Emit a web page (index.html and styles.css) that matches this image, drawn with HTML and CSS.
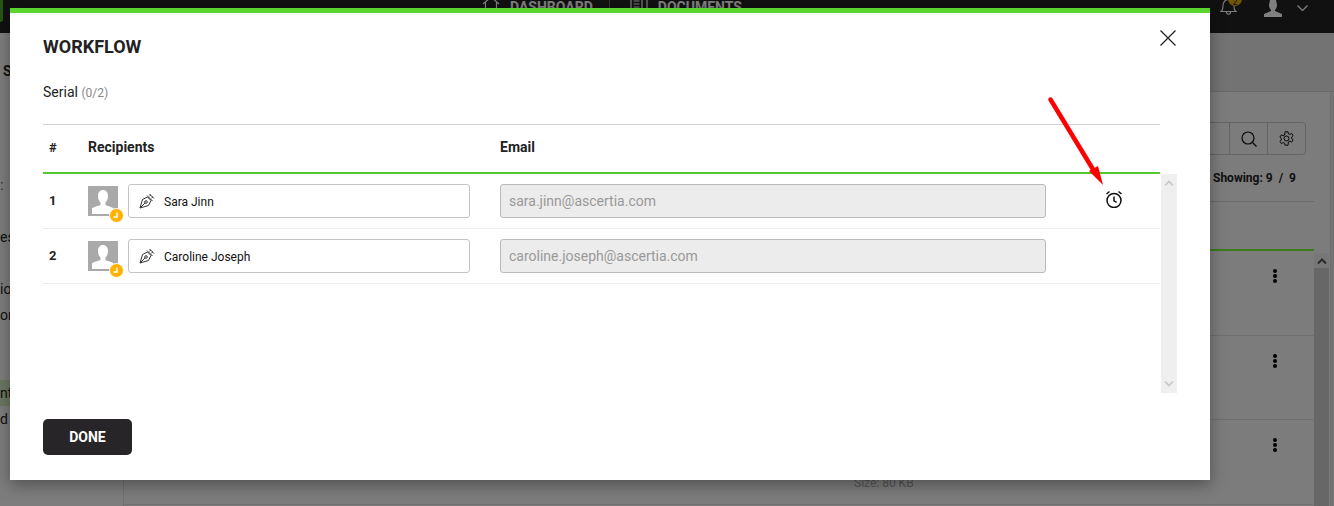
FILE: index.html
```html
<!DOCTYPE html>
<html lang="en">
<head>
  <meta charset="UTF-8" />
  <meta name="viewport" content="width=device-width, initial-scale=1.0" />
  <title>Workflow</title>
  <link rel="stylesheet" href="styles.css">
</head>
<body>
  <div class="page">
    <header class="topbar">
      <div class="brand"></div>
      <nav class="nav">
        <svg class="nav-icon" width="18" height="18" viewBox="0 0 18 18" fill="none" stroke="#fff" stroke-width="1.2"><path d="M1 8 9 1l8 7M3.5 6.5V17h11V6.5"/></svg>
        <span class="nav-link">DASHBOARD</span>
        <span class="nav-sep"></span>
        <svg class="nav-icon" width="18" height="18" viewBox="0 0 18 18" fill="none" stroke="#fff" stroke-width="1.2"><path d="M1 1h11v16H1zM15 2h2v15h-2M3.5 5h6M3.5 8h6M3.5 11h6"/></svg>
        <span class="nav-link">DOCUMENTS</span>
      </nav>
      <div class="top-actions">
        <div class="bell">
          <svg width="17" height="18" viewBox="0 0 17 18" fill="none" stroke="#fff" stroke-width="1.1"><path d="M1 13.5c2-1.500 2-3 2-6 0-3 2-6 5.500-6S14 4.500 14 7.500c0 3 0 4.500 2 6zM6.500 14c0 3 4 3 4 0"/></svg>
          <span class="bell-badge">2</span>
        </div>
        <svg class="user-icon" width="18" height="17" viewBox="0 0 18 17" fill="#fff"><path d="M6 0h6l1 5c0 2-1 4-2 5v1l7 3v3H0v-3l7-3v-1C6 9 5 7 5 5z"/></svg>
        <svg class="caret" width="11" height="6" viewBox="0 0 11 6" fill="none" stroke="#fff" stroke-width="1.3"><path d="M.5.5l5 5 5-5"/></svg>
      </div>
    </header>

    <div class="content">
      <aside class="sidebar">
        <div class="side-title">S</div>
        <div class="side-link">:</div>
        <div class="side-item first">es</div>
        <div class="side-item tall">io</div>
        <div class="side-item">on</div>
        <div class="side-item active">nt</div>
        <div class="side-item">d</div>
      </aside>
      <main class="main">
        <div class="subhead"></div>
        <div class="panel">
          <div class="list-col">
            <div class="toolbar">
              <div class="search-box">
                <span class="search-btn">
                  <svg width="16" height="16" viewBox="0 0 16 16" fill="none" stroke="#111" stroke-width="1.2"><circle cx="7" cy="7" r="6"/><path d="M11.5 11.5l4 4"/></svg>
                </span>
                <span class="search-btn">
                  <svg width="15" height="15" viewBox="0 0 15 15" fill="none" stroke="#111" stroke-width="1"><path d="M6 .8h3l.4 1.900 1.500.7 1.700-1 1.500 2.300-1.400 1.300v1.600l1.400 1.300-1.500 2.300-1.700-1-1.500.7L9 14.200H6l-.4-1.900-1.500-.7-1.700 1L.9 10.300l1.400-1.300V7.400L.9 6.100l1.500-2.300 1.700 1 1.500-.7z"/><circle cx="7.500" cy="7.500" r="2.500"/></svg>
                </span>
              </div>
            </div>
            <div class="showing">Showing: 9 &nbsp;/&nbsp; 9</div>
            <div class="list-rule"></div>
            <div class="list-body">
              <div class="list-row"><span class="kebab"></span></div>
              <div class="list-row"><span class="kebab"></span></div>
              <div class="list-row"><span class="kebab"></span><span class="size">Size: 80 KB</span></div>
            </div>
          </div>
          <div class="page-scroll">
            <span class="page-scroll-btn">
              <svg width="10" height="6" viewBox="0 0 10 6" fill="none" stroke="#555" stroke-width="2"><path d="M1 5.500l4-4 4 4"/></svg>
            </span>
          </div>
        </div>
      </main>
    </div>

    <div class="overlay"></div>

    <section class="modal">
      <button class="close-btn" aria-label="Close">
        <svg width="16" height="16" viewBox="0 0 16 16" fill="none" stroke="#222" stroke-width="1.3"><path d="M.5.5l15 15M15.500.5l-15 15"/></svg>
      </button>
      <h2 class="modal-title">WORKFLOW</h2>
      <p class="serial">Serial <span class="count">(0/2)</span></p>

      <div class="wf-head">
        <span class="wf-num">#</span>
        <span>Recipients</span>
        <span>Email</span>
      </div>

      <div class="wf-body">
        <div class="wf-rows">
          <div class="wf-row">
            <span class="wf-num">1</span>
            <div class="recipient">
              <div class="avatar">
                <svg width="30" height="30" viewBox="0 0 30 30"><path fill="#fff" d="M10 10c0-3.500 2-6 5-6s5 2.500 5 6c0 3-1 5-2.500 6.500V19c3 1.500 7 2 8 3.500V28H4v-5.500c1-1.500 5-2 8.500-3.500v-2.500C11 15 10 13 10 10z"/></svg>
                <span class="badge"><svg width="10" height="10" viewBox="0 0 10 10" fill="none" stroke="#fff" stroke-width="1.4"><path d="M6 1.500V6H2.500"/></svg></span>
              </div>
              <div class="name-field">
                <svg class="pen" width="16" height="16" viewBox="0 0 16 16" fill="none" stroke="#333" stroke-width="1"><path d="M1 15l2.500-8.500L8.500 4 12 7.500l-2.500 5zM1 15l5-5"/><circle cx="7" cy="9" r="1.300"/><path d="M8 2.500L13.500 8M10.500 1L15 5.500M10.500 3L12 1.800M12.500 5L14 3.800"/></svg>
                <span class="name">Sara Jinn</span>
              </div>
            </div>
            <div class="email-field">sara.jinn@ascertia.com</div>
            <div class="wf-alarm">
              <svg width="18" height="18" viewBox="0 0 18 18" fill="none" stroke="#111" stroke-width="1.5"><circle cx="9" cy="10.500" r="7"/><path d="M9 6.500v4.300l2.600 1.500M1.500 4l3-2.500M16.500 4l-3-2.500"/></svg>
            </div>
          </div>
          <div class="wf-row">
            <span class="wf-num">2</span>
            <div class="recipient">
              <div class="avatar">
                <svg width="30" height="30" viewBox="0 0 30 30"><path fill="#fff" d="M10 10c0-3.500 2-6 5-6s5 2.500 5 6c0 3-1 5-2.500 6.500V19c3 1.500 7 2 8 3.500V28H4v-5.500c1-1.500 5-2 8.500-3.500v-2.500C11 15 10 13 10 10z"/></svg>
                <span class="badge"><svg width="10" height="10" viewBox="0 0 10 10" fill="none" stroke="#fff" stroke-width="1.4"><path d="M6 1.500V6H2.500"/></svg></span>
              </div>
              <div class="name-field">
                <svg class="pen" width="16" height="16" viewBox="0 0 16 16" fill="none" stroke="#333" stroke-width="1"><path d="M1 15l2.500-8.500L8.500 4 12 7.500l-2.500 5zM1 15l5-5"/><circle cx="7" cy="9" r="1.300"/><path d="M8 2.500L13.500 8M10.500 1L15 5.500M10.500 3L12 1.800M12.500 5L14 3.800"/></svg>
                <span class="name">Caroline Joseph</span>
              </div>
            </div>
            <div class="email-field">caroline.joseph@ascertia.com</div>
            <div class="wf-alarm"></div>
          </div>
        </div>
        <div class="wf-scroll">
          <svg width="10" height="6" viewBox="0 0 10 6" fill="none" stroke="#c8c8c8" stroke-width="1.6"><path d="M1 5.500l4-4 4 4"/></svg>
          <svg width="10" height="6" viewBox="0 0 10 6" fill="none" stroke="#c8c8c8" stroke-width="1.6"><path d="M1 .5l4 4 4-4"/></svg>
        </div>
      </div>

      <button class="done-btn">DONE</button>
    </section>

    <svg class="callout" width="70" height="100" viewBox="0 0 70 100">
      <path d="M3.500 3.500 47 75" stroke="#fe0000" stroke-width="4.500" stroke-linecap="round" fill="none"/>
      <path d="M42 75l9-5 5 19z" fill="#fe0000"/>
    </svg>
  </div>
</body>
</html>
```

FILE: styles.css
```css
* {
  box-sizing: border-box;
}
body {
  margin: 0;
  font-family: Roboto, Arial, sans-serif;
  color: #222;
}
.page {
  position: relative;
  width: 1334px;
  height: 506px;
  overflow: hidden;
  background: #fafafa;
}

/* top bar, scrolled so its text is cut at the top */
.topbar {
  position: relative;
  display: flex;
  height: 33px;
  background: #222;
  overflow: hidden;
}
.brand {
  width: 3px;
  height: 22px;
  background: #4caf20;
  border-radius: 0 0 3px 0;
}
.nav {
  display: flex;
  align-items: flex-end;
  height: 14px;
  margin-left: 479px;
}
.nav-icon {
  flex: none;
  margin-right: 10px;
}
.nav-link {
  color: #fff;
  font-size: 14px;
  font-weight: 700;
  line-height: 14px;
}
.nav-sep {
  width: 1px;
  height: 14px;
  margin: 0 20px 0 16px;
  background: #666;
}
.top-actions {
  display: flex;
  align-items: flex-start;
  margin-left: auto;
  padding-right: 26px;
}
.bell {
  position: relative;
  margin-top: -2px;
  margin-right: 27px;
  height: 18px;
}
.bell-badge {
  position: absolute;
  top: 0;
  left: 8px;
  width: 14px;
  height: 8px;
  border-radius: 0 0 7px 7px;
  background: #e6ac00;
  color: #222;
  font-size: 9px;
  line-height: 8px;
  text-align: center;
}
.caret {
  margin-top: 5px;
  margin-left: 15px;
}

/* page behind the dialog */
.content {
  display: flex;
  height: 473px;
}
.sidebar {
  flex: none;
  width: 124px;
  overflow: hidden;
  font-size: 14px;
  line-height: 26px;
  border-right: 1px solid #e0e0e0;
}
.side-title {
  margin-top: 25px;
  padding-left: 3px;
  font-weight: 700;
}
.side-link {
  margin-top: 88px;
  color: #1c6fb5;
}
.side-item {
  white-space: nowrap;
}
.first {
  margin-top: 26px;
}
.tall {
  margin-top: 26px;
}
.side-item.active {
  margin-top: 52px;
  background: #d6efc6;
}
.main {
  flex: 1;
  background: #e6e6e6;
}
.subhead {
  height: 59px;
  border-bottom: 1px solid #d2d2d2;
}
.panel {
  display: flex;
  align-items: flex-start;
  width: 1207px;
  height: 414px;
  background: #f8f8f8;
  border-right: 1px solid #dcdcdc;
}
.list-col {
  width: 1190px;
}
.toolbar {
  display: flex;
  justify-content: flex-end;
  height: 33px;
  margin-top: 30px;
  padding-right: 8px;
}
.search-box {
  display: flex;
  width: 200px;
  justify-content: flex-end;
  border: 1px solid #c8c8c8;
  border-radius: 4px;
}
.search-btn {
  display: flex;
  align-items: center;
  justify-content: center;
  width: 38px;
  border-left: 1px solid #c8c8c8;
}
.showing {
  margin-top: 14px;
  padding-left: 1089px;
  font-size: 12px;
  font-weight: 700;
  line-height: 18px;
  white-space: nowrap;
}
.list-rule {
  height: 1px;
  margin-top: 14px;
  background: #d6d6d6;
}
.list-body {
  margin-top: 47px;
  border-top: 2px solid #74f838;
}
.list-row {
  position: relative;
  height: 85px;
  border-bottom: 1px solid #e0e0e0;
}
.list-row:nth-child(2) {
  height: 84px;
}
.kebab {
  position: absolute;
  top: 18px;
  left: 1149px;
  width: 4px;
  height: 4px;
  border-radius: 50%;
  background: #000;
  box-shadow: 0 5px 0 #000, 0 10px 0 #000;
}
.size {
  position: absolute;
  top: 55px;
  left: 730px;
  color: #aaa;
  font-size: 12px;
  line-height: 16px;
}
.page-scroll {
  width: 15px;
  height: 253px;
  margin-top: 161px;
  background: #cfcfcf;
}
.page-scroll-btn {
  display: flex;
  align-items: center;
  justify-content: center;
  height: 15px;
  background: #efefef;
}

.overlay {
  position: absolute;
  inset: 0;
  background: rgba(0, 0, 0, 0.5);
}

/* dialog */
.modal {
  position: absolute;
  top: 8px;
  left: 10px;
  display: flex;
  flex-direction: column;
  align-items: flex-start;
  width: 1200px;
  height: 472px;
  padding: 24px 50px 0 33px;
  background: #fff;
  border-top: 5px solid #5ad52f;
  box-shadow: 0 5px 15px rgba(0, 0, 0, 0.35);
}
.close-btn {
  position: absolute;
  top: 17px;
  right: 34px;
  width: 16px;
  height: 16px;
  padding: 0;
  border: 0;
  background: none;
}
.close-btn svg {
  display: block;
}
.modal-title {
  margin: 0;
  font-size: 18px;
  font-weight: 700;
  line-height: 20px;
}
.serial {
  margin: 25px 0 0;
  font-size: 14px;
  line-height: 20px;
}
.count {
  color: #888;
  font-size: 12px;
}
.wf-head {
  display: grid;
  grid-template-columns: 45px 412px 1fr;
  align-items: center;
  flex: none;
  width: 1117px;
  height: 50px;
  margin-top: 21px;
  padding-bottom: 3px;
  border-top: 1px solid #d0d0d0;
  border-bottom: 2px solid #55c82f;
  font-size: 14px;
  font-weight: 700;
}
.wf-num {
  padding-left: 6px;
  font-size: 13px;
  font-weight: 700;
}
.wf-body {
  display: flex;
  flex: none;
  height: 219px;
}
.wf-rows {
  width: 1117px;
}
.wf-row {
  display: grid;
  grid-template-columns: 45px 412px 546px 1fr;
  align-items: center;
  height: 55px;
  padding-bottom: 1px;
  border-bottom: 1px solid #ececec;
}
.recipient {
  display: flex;
  align-items: center;
  gap: 10px;
  width: 382px;
}
.avatar {
  position: relative;
  width: 30px;
  height: 30px;
  background: #a9a9a9;
}
.avatar > svg {
  display: block;
}
.badge {
  position: absolute;
  right: -5.500px;
  bottom: -7.500px;
  display: flex;
  align-items: center;
  justify-content: center;
  width: 15px;
  height: 15px;
  border-radius: 50%;
  background: #ffb300;
  border: 1px solid #fff;
}
.name-field {
  display: flex;
  align-items: center;
  flex: 1;
  height: 34px;
  padding-left: 10px;
  border: 1px solid #c4c4c4;
  border-radius: 3px;
  font-size: 12px;
  color: #111;
}
.pen {
  margin-right: 9px;
}
.name {
  padding-top: 2px;
}
.email-field {
  height: 34px;
  padding-left: 8px;
  border: 1px solid #bbb;
  border-radius: 3px;
  background: #ececec;
  color: #999;
  font-size: 14px;
  line-height: 32px;
}
.wf-alarm {
  display: flex;
  padding-left: 59px;
  margin-top: -4px;
}
.wf-scroll {
  display: flex;
  flex-direction: column;
  justify-content: space-between;
  align-items: center;
  width: 16px;
  margin-left: 1px;
  padding: 6px 0;
  background: #efefef;
}
.done-btn {
  width: 89px;
  height: 36px;
  margin-top: 26px;
  border: none;
  border-radius: 5px;
  background: #272527;
  color: #fff;
  font-family: Roboto, Arial, sans-serif;
  font-size: 14px;
  font-weight: 700;
}

/* red arrow drawn on top of the screenshot */
.callout {
  position: absolute;
  top: 96px;
  left: 1047px;
}
```
